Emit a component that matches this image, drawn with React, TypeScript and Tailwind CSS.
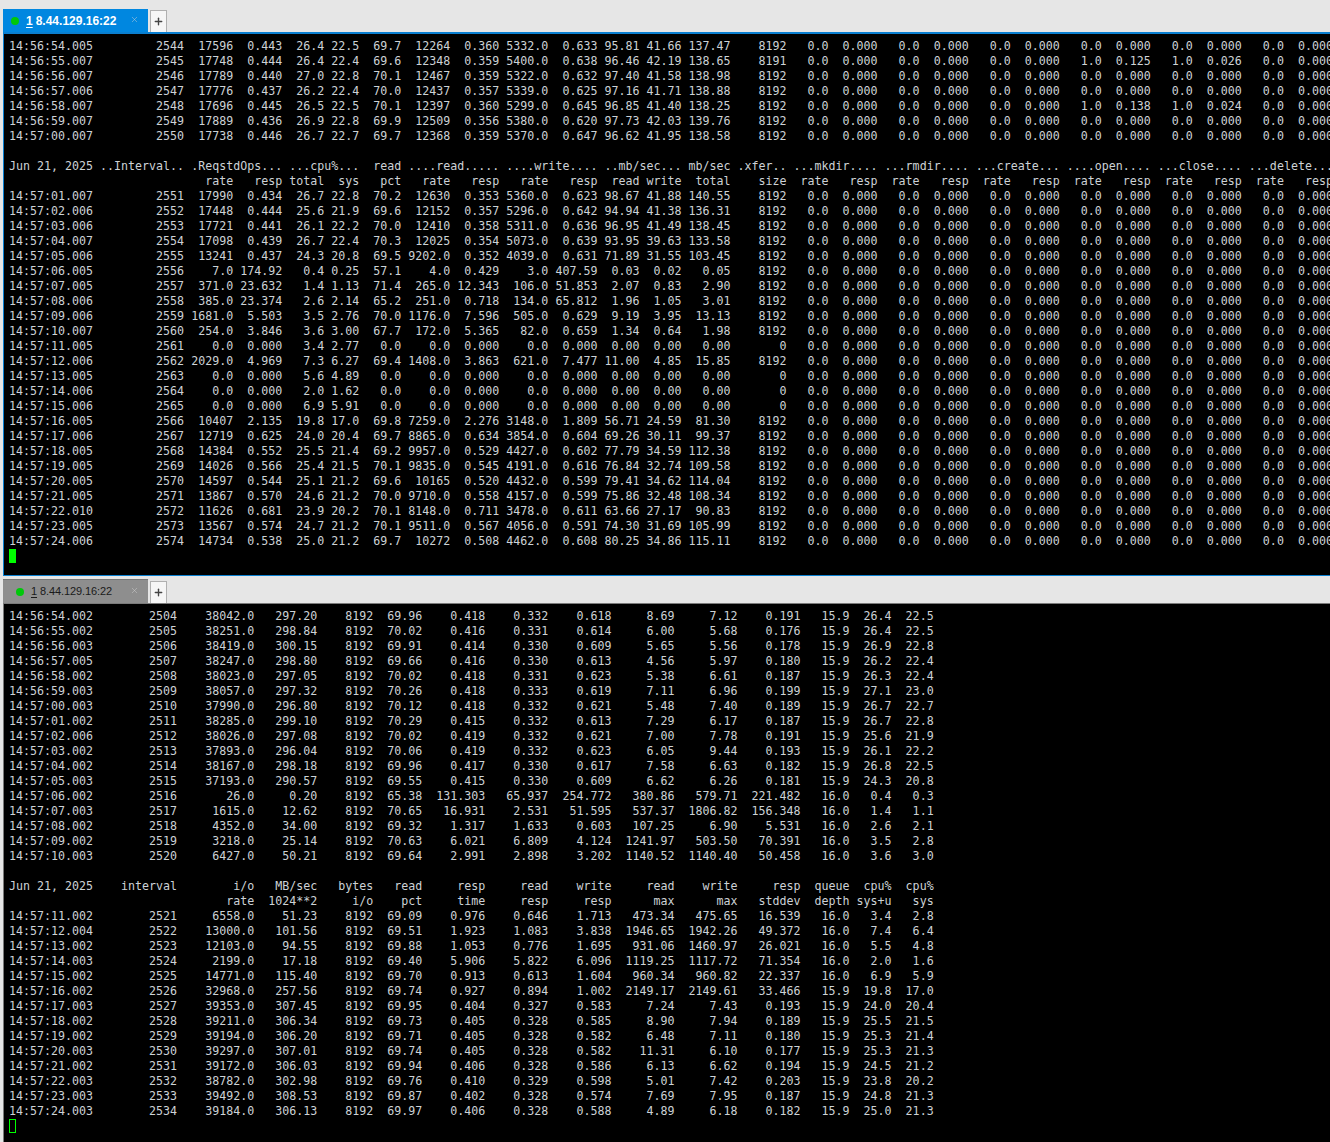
import { Plus, X } from "lucide-react";

const topWidths = [12, 13, 7, 7, 6, 5, 6, 7, 7, 7, 7, 6, 6, 7, 8];
const bottomWidths = [12, 12, 11, 9, 8, 7, 9, 9, 9, 9, 9, 9, 7, 6, 6];

function fmt(widths: number[], cells: string[]) {
  return cells.map((c, i) => (i === 0 ? c.padEnd(widths[0]) : c.padStart(widths[i]))).join("");
}

// trailing mkdir/rmdir/create/open/close/delete columns of the first pane
function ops(open = "0.0", openResp = "0.000", close = "0.0", closeResp = "0.000") {
  const pairs = [
    ["0.0", "0.000"],
    ["0.0", "0.000"],
    ["0.0", "0.000"],
    [open, openResp],
    [close, closeResp],
    ["0.0", "0.000"],
  ];
  return pairs.map(([a, b]) => a.padStart(6) + b.padStart(7)).join("");
}

function topRow(s: string) {
  const [line, extra] = s.split("|");
  const extras = extra ? extra.trim().split(" ") : [];
  return fmt(topWidths, line.trim().split(" ")) + ops(...extras);
}

const topFirst = [
  "14:56:54.005 2544 17596 0.443 26.4 22.5 69.7 12264 0.360 5332.0 0.633 95.81 41.66 137.47 8192",
  "14:56:55.007 2545 17748 0.444 26.4 22.4 69.6 12348 0.359 5400.0 0.638 96.46 42.19 138.65 8191|1.0 0.125 1.0 0.026",
  "14:56:56.007 2546 17789 0.440 27.0 22.8 70.1 12467 0.359 5322.0 0.632 97.40 41.58 138.98 8192",
  "14:56:57.006 2547 17776 0.437 26.2 22.4 70.0 12437 0.357 5339.0 0.625 97.16 41.71 138.88 8192",
  "14:56:58.007 2548 17696 0.445 26.5 22.5 70.1 12397 0.360 5299.0 0.645 96.85 41.40 138.25 8192|1.0 0.138 1.0 0.024",
  "14:56:59.007 2549 17889 0.436 26.9 22.8 69.9 12509 0.356 5380.0 0.620 97.73 42.03 139.76 8192",
  "14:57:00.007 2550 17738 0.446 26.7 22.7 69.7 12368 0.359 5370.0 0.647 96.62 41.95 138.58 8192",
];

const topSecond = [
  "14:57:01.007 2551 17990 0.434 26.7 22.8 70.2 12630 0.353 5360.0 0.623 98.67 41.88 140.55 8192",
  "14:57:02.006 2552 17448 0.444 25.6 21.9 69.6 12152 0.357 5296.0 0.642 94.94 41.38 136.31 8192",
  "14:57:03.006 2553 17721 0.441 26.1 22.2 70.0 12410 0.358 5311.0 0.636 96.95 41.49 138.45 8192",
  "14:57:04.007 2554 17098 0.439 26.7 22.4 70.3 12025 0.354 5073.0 0.639 93.95 39.63 133.58 8192",
  "14:57:05.006 2555 13241 0.437 24.3 20.8 69.5 9202.0 0.352 4039.0 0.631 71.89 31.55 103.45 8192",
  "14:57:06.005 2556 7.0 174.92 0.4 0.25 57.1 4.0 0.429 3.0 407.59 0.03 0.02 0.05 8192",
  "14:57:07.005 2557 371.0 23.632 1.4 1.13 71.4 265.0 12.343 106.0 51.853 2.07 0.83 2.90 8192",
  "14:57:08.006 2558 385.0 23.374 2.6 2.14 65.2 251.0 0.718 134.0 65.812 1.96 1.05 3.01 8192",
  "14:57:09.006 2559 1681.0 5.503 3.5 2.76 70.0 1176.0 7.596 505.0 0.629 9.19 3.95 13.13 8192",
  "14:57:10.007 2560 254.0 3.846 3.6 3.00 67.7 172.0 5.365 82.0 0.659 1.34 0.64 1.98 8192",
  "14:57:11.005 2561 0.0 0.000 3.4 2.77 0.0 0.0 0.000 0.0 0.000 0.00 0.00 0.00 0",
  "14:57:12.006 2562 2029.0 4.969 7.3 6.27 69.4 1408.0 3.863 621.0 7.477 11.00 4.85 15.85 8192",
  "14:57:13.005 2563 0.0 0.000 5.6 4.89 0.0 0.0 0.000 0.0 0.000 0.00 0.00 0.00 0",
  "14:57:14.006 2564 0.0 0.000 2.0 1.62 0.0 0.0 0.000 0.0 0.000 0.00 0.00 0.00 0",
  "14:57:15.006 2565 0.0 0.000 6.9 5.91 0.0 0.0 0.000 0.0 0.000 0.00 0.00 0.00 0",
  "14:57:16.005 2566 10407 2.135 19.8 17.0 69.8 7259.0 2.276 3148.0 1.809 56.71 24.59 81.30 8192",
  "14:57:17.006 2567 12719 0.625 24.0 20.4 69.7 8865.0 0.634 3854.0 0.604 69.26 30.11 99.37 8192",
  "14:57:18.005 2568 14384 0.552 25.5 21.4 69.2 9957.0 0.529 4427.0 0.602 77.79 34.59 112.38 8192",
  "14:57:19.005 2569 14026 0.566 25.4 21.5 70.1 9835.0 0.545 4191.0 0.616 76.84 32.74 109.58 8192",
  "14:57:20.005 2570 14597 0.544 25.1 21.2 69.6 10165 0.520 4432.0 0.599 79.41 34.62 114.04 8192",
  "14:57:21.005 2571 13867 0.570 24.6 21.2 70.0 9710.0 0.558 4157.0 0.599 75.86 32.48 108.34 8192",
  "14:57:22.010 2572 11626 0.681 23.9 20.2 70.1 8148.0 0.711 3478.0 0.611 63.66 27.17 90.83 8192",
  "14:57:23.005 2573 13567 0.574 24.7 21.2 70.1 9511.0 0.567 4056.0 0.591 74.30 31.69 105.99 8192",
  "14:57:24.006 2574 14734 0.538 25.0 21.2 69.7 10272 0.508 4462.0 0.608 80.25 34.86 115.11 8192",
];

const topHeader =
  "Jun 21, 2025 ..Interval.. .ReqstdOps... ...cpu%...  read ....read..... ....write.... ..mb/sec... mb/sec .xfer.. ...mkdir.... ...rmdir.... ...create... ....open.... ...close.... ...delete...";
const topSub =
  fmt(topWidths, ["", "", "rate", "resp", "total", "sys", "pct", "rate", "resp", "rate", "resp", "read", "write", "total", "size"]) +
  "  rate   resp".repeat(6);

const bottomFirst = [
  "14:56:54.002 2504 38042.0 297.20 8192 69.96 0.418 0.332 0.618 8.69 7.12 0.191 15.9 26.4 22.5",
  "14:56:55.002 2505 38251.0 298.84 8192 70.02 0.416 0.331 0.614 6.00 5.68 0.176 15.9 26.4 22.5",
  "14:56:56.003 2506 38419.0 300.15 8192 69.91 0.414 0.330 0.609 5.65 5.56 0.178 15.9 26.9 22.8",
  "14:56:57.005 2507 38247.0 298.80 8192 69.66 0.416 0.330 0.613 4.56 5.97 0.180 15.9 26.2 22.4",
  "14:56:58.002 2508 38023.0 297.05 8192 70.02 0.418 0.331 0.623 5.38 6.61 0.187 15.9 26.3 22.4",
  "14:56:59.003 2509 38057.0 297.32 8192 70.26 0.418 0.333 0.619 7.11 6.96 0.199 15.9 27.1 23.0",
  "14:57:00.003 2510 37990.0 296.80 8192 70.12 0.418 0.332 0.621 5.48 7.40 0.189 15.9 26.7 22.7",
  "14:57:01.002 2511 38285.0 299.10 8192 70.29 0.415 0.332 0.613 7.29 6.17 0.187 15.9 26.7 22.8",
  "14:57:02.006 2512 38026.0 297.08 8192 70.02 0.419 0.332 0.621 7.00 7.78 0.191 15.9 25.6 21.9",
  "14:57:03.002 2513 37893.0 296.04 8192 70.06 0.419 0.332 0.623 6.05 9.44 0.193 15.9 26.1 22.2",
  "14:57:04.002 2514 38167.0 298.18 8192 69.96 0.417 0.330 0.617 7.58 6.63 0.182 15.9 26.8 22.5",
  "14:57:05.003 2515 37193.0 290.57 8192 69.55 0.415 0.330 0.609 6.62 6.26 0.181 15.9 24.3 20.8",
  "14:57:06.002 2516 26.0 0.20 8192 65.38 131.303 65.937 254.772 380.86 579.71 221.482 16.0 0.4 0.3",
  "14:57:07.003 2517 1615.0 12.62 8192 70.65 16.931 2.531 51.595 537.37 1806.82 156.348 16.0 1.4 1.1",
  "14:57:08.002 2518 4352.0 34.00 8192 69.32 1.317 1.633 0.603 107.25 6.90 5.531 16.0 2.6 2.1",
  "14:57:09.002 2519 3218.0 25.14 8192 70.63 6.021 6.809 4.124 1241.97 503.50 70.391 16.0 3.5 2.8",
  "14:57:10.003 2520 6427.0 50.21 8192 69.64 2.991 2.898 3.202 1140.52 1140.40 50.458 16.0 3.6 3.0",
];

const bottomSecond = [
  "14:57:11.002 2521 6558.0 51.23 8192 69.09 0.976 0.646 1.713 473.34 475.65 16.539 16.0 3.4 2.8",
  "14:57:12.004 2522 13000.0 101.56 8192 69.51 1.923 1.083 3.838 1946.65 1942.26 49.372 16.0 7.4 6.4",
  "14:57:13.002 2523 12103.0 94.55 8192 69.88 1.053 0.776 1.695 931.06 1460.97 26.021 16.0 5.5 4.8",
  "14:57:14.003 2524 2199.0 17.18 8192 69.40 5.906 5.822 6.096 1119.25 1117.72 71.354 16.0 2.0 1.6",
  "14:57:15.002 2525 14771.0 115.40 8192 69.70 0.913 0.613 1.604 960.34 960.82 22.337 16.0 6.9 5.9",
  "14:57:16.002 2526 32968.0 257.56 8192 69.74 0.927 0.894 1.002 2149.17 2149.61 33.466 15.9 19.8 17.0",
  "14:57:17.003 2527 39353.0 307.45 8192 69.95 0.404 0.327 0.583 7.24 7.43 0.193 15.9 24.0 20.4",
  "14:57:18.002 2528 39211.0 306.34 8192 69.73 0.405 0.328 0.585 8.90 7.94 0.189 15.9 25.5 21.5",
  "14:57:19.002 2529 39194.0 306.20 8192 69.71 0.405 0.328 0.582 6.48 7.11 0.180 15.9 25.3 21.4",
  "14:57:20.003 2530 39297.0 307.01 8192 69.74 0.405 0.328 0.582 11.31 6.10 0.177 15.9 25.3 21.3",
  "14:57:21.002 2531 39172.0 306.03 8192 69.94 0.406 0.328 0.586 6.13 6.62 0.194 15.9 24.5 21.2",
  "14:57:22.003 2532 38782.0 302.98 8192 69.76 0.410 0.329 0.598 5.01 7.42 0.203 15.9 23.8 20.2",
  "14:57:23.003 2533 39492.0 308.53 8192 69.87 0.402 0.328 0.574 7.69 7.95 0.187 15.9 24.8 21.3",
  "14:57:24.003 2534 39184.0 306.13 8192 69.97 0.406 0.328 0.588 4.89 6.18 0.182 15.9 25.0 21.3",
];

const bottomRow = (s: string) => fmt(bottomWidths, s.split(" "));

const topLines = [
  ...topFirst.map(topRow),
  "",
  topHeader,
  topSub,
  ...topSecond.map(topRow),
];

const bottomLines = [
  ...bottomFirst.map(bottomRow),
  "",
  fmt(bottomWidths, ["Jun 21, 2025", ..."interval i/o MB/sec bytes read resp read write read write resp queue cpu% cpu%".split(" ")]),
  fmt(bottomWidths, ["", "", ..."rate 1024**2 i/o pct time resp resp max max stddev depth sys+u sys".split(" ")]),
  ...bottomSecond.map(bottomRow),
];

function Tab({ active }: { active: boolean }) {
  return (
    <div
      className={
        active
          ? "relative w-[145px] h-[23px] flex items-center pl-[8px] pt-[1px] bg-[#0087e0] text-white font-bold text-[12px]"
          : "relative w-[145px] h-[24px] flex items-center pl-[13px] bg-[#8e8e8e] text-[#1a1a1a] text-[11px] tracking-[-0.1px] border-t border-[#777]"
      }
      style={{ fontFamily: '"Liberation Sans", Arial, sans-serif' }}
    >
      <span className="w-[8px] h-[8px] rounded-full bg-[#00c80a] mr-[7px]" />
      <span className="underline underline-offset-2 mr-[3px]">1</span>
      <span>8.44.129.16:22</span>
      <X className="absolute right-[9px] top-[6px] text-[#d4d4d4]" size={9} strokeWidth={1.2} />
    </div>
  );
}

function NewTab() {
  return (
    <div className="w-[17px] h-[22px] flex items-center justify-center bg-[#f6f6f6] border border-[#b0b0b0] border-b-0">
      <Plus className="text-[#444]" size={11} strokeWidth={3} />
    </div>
  );
}

function Terminal({ lines, active }: { lines: string[]; active: boolean }) {
  return (
    <div
      className={
        active
          ? "ml-[3px] h-[544px] overflow-hidden bg-black border-t-2 border-b border-l border-[#0a7fd0] pl-[5px] pt-[5px]"
          : "ml-[3px] h-[539px] overflow-hidden bg-black border-t border-l border-[#7a7a7a] pl-[5px] pt-[5px]"
      }
    >
      <div
        className="text-[11.63px] tracking-[0.006px] leading-[15px] text-[#cdd2d6] whitespace-pre"
        style={{ fontFamily: '"DejaVu Sans Mono", monospace' }}
      >
        {lines.map((line, i) => (
          <div key={i} className="h-[15px]">
            {line}
          </div>
        ))}
      </div>
      {active ? (
        <div className="w-[7px] h-[14px] bg-[#00ff00]" />
      ) : (
        <div className="w-[7px] h-[14px] border border-[#00ff00]" />
      )}
    </div>
  );
}

export default function App() {
  return (
    <div className="w-[1330px] h-[1142px] overflow-hidden bg-[#e6e6e6]">
      <div className="h-[32px] pl-[3px] flex items-end gap-[2px]">
        <Tab active />
        <NewTab />
      </div>
      <Terminal lines={topLines} active />
      <div className="h-[27px] pl-[3px] flex items-end gap-[2px]">
        <Tab active={false} />
        <NewTab />
      </div>
      <Terminal lines={bottomLines} active={false} />
    </div>
  );
}
